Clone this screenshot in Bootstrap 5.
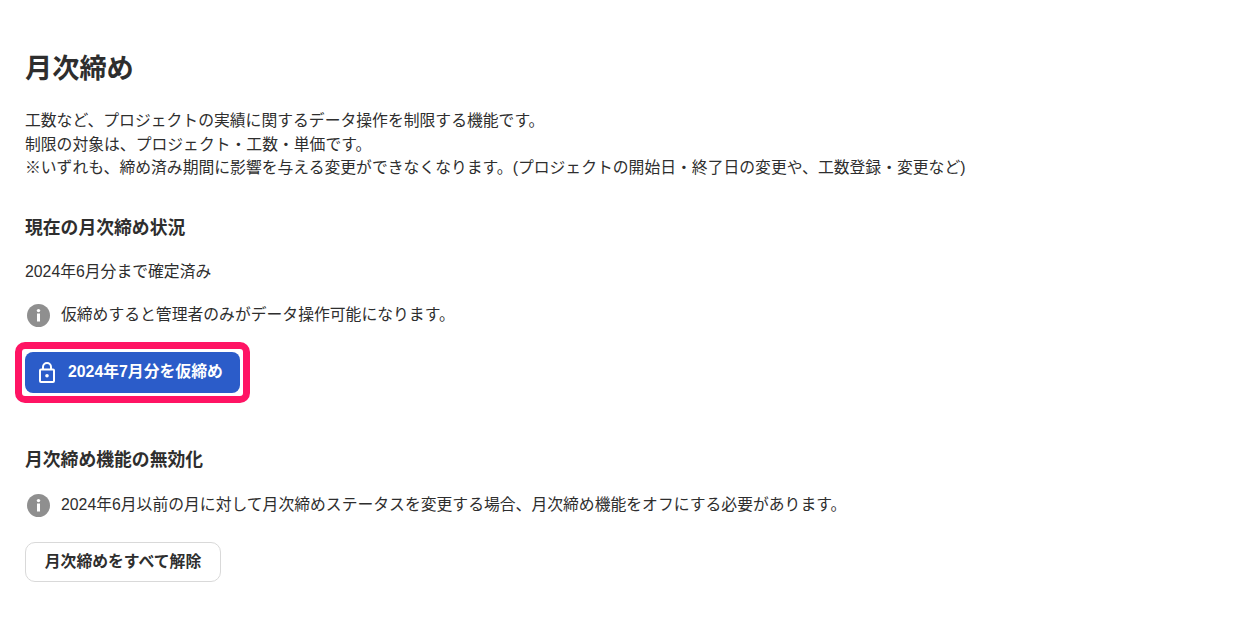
<!DOCTYPE html>
<html lang="ja"><head><meta charset="utf-8">
<link href="https://cdn.jsdelivr.net/npm/bootstrap@5.3.0/dist/css/bootstrap.min.css" rel="stylesheet">
<style>
body{font-family:"Liberation Sans","Noto Sans CJK JP",sans-serif;color:#2e2e2e;background:#fff;font-size:15.82px}
.page-wrap{padding:49px 25px 0}
.page-title{font-size:27.2px;font-weight:700;line-height:40px;margin:0 0 20px}
.intro{line-height:23.5px;margin:0 0 36.5px}
.sec-title{font-size:17.82px;font-weight:700;line-height:24px;margin:0 0 20px}
.status{line-height:24px;margin:0 0 19px}
.info-row{line-height:24px;gap:11px;padding-left:2px}
.info-ic{width:23px;height:23px;flex:none}
.lock-frame{width:235px;border:7px solid #ff1464;border-radius:10px;padding:3px;margin:15px 0 0 -10px}
.lock-btn{background:#2b5cc9;color:#fff;font-size:15.84px;font-weight:700;line-height:20px;border:0;border-radius:8px;width:100%;height:41px;padding:0 0 0 14px;gap:13px}
.lock-btn:hover{background:#2b5cc9;color:#fff}
.lock-btn span{margin-bottom:1px}
.sec-gap{margin-top:45px;margin-bottom:21px}
.plain-btn{background:#fff;color:#2e2e2e;font-size:15.84px;font-weight:700;border:1px solid #d9d9d9;border-radius:10px;height:40px;width:196px;padding:0;margin-top:25px}
</style></head><body>
<div class="page-wrap">
<h1 class="page-title">月次締め</h1>
<p class="intro">工数など、プロジェクトの実績に関するデータ操作を制限する機能です。<br>制限の対象は、プロジェクト・工数・単価です。<br>※いずれも、締め済み期間に影響を与える変更ができなくなります。(プロジェクトの開始日・終了日の変更や、工数登録・変更など)</p>
<h2 class="sec-title">現在の月次締め状況</h2>
<p class="status">2024年6月分まで確定済み</p>
<div class="d-flex align-items-center info-row">
<svg class="info-ic" viewBox="0 0 23 23"><circle cx="11.5" cy="11.5" r="11.5" fill="#8f8f8f"/><rect x="10" y="9.5" width="3" height="8" fill="#fff"/><circle cx="11.5" cy="6.6" r="1.7" fill="#fff"/></svg>
<span>仮締めすると管理者のみがデータ操作可能になります。</span></div>
<div class="lock-frame"><button class="btn d-flex align-items-center lock-btn" type="button">
<svg width="16" height="21" viewBox="0 0 16 21" fill="none" stroke="#fff" stroke-width="2"><rect x="1" y="7.5" width="14" height="12.5" rx="1"/><path d="M4 7.5V5a4 4 0 0 1 8 0v2.5"/><circle cx="8" cy="13.7" r="1.8" fill="#fff" stroke="none"/></svg>
<span>2024年7月分を仮締め</span></button></div>
<h2 class="sec-title sec-gap">月次締め機能の無効化</h2>
<div class="d-flex align-items-center info-row">
<svg class="info-ic" viewBox="0 0 23 23"><circle cx="11.5" cy="11.5" r="11.5" fill="#8f8f8f"/><rect x="10" y="9.5" width="3" height="8" fill="#fff"/><circle cx="11.5" cy="6.6" r="1.7" fill="#fff"/></svg>
<span>2024年6月以前の月に対して月次締めステータスを変更する場合、月次締め機能をオフにする必要があります。</span></div>
<button class="btn plain-btn" type="button">月次締めをすべて解除</button>
</div>
<script src="https://cdn.jsdelivr.net/npm/bootstrap@5.3.0/dist/js/bootstrap.bundle.min.js"></script>
</body></html>
